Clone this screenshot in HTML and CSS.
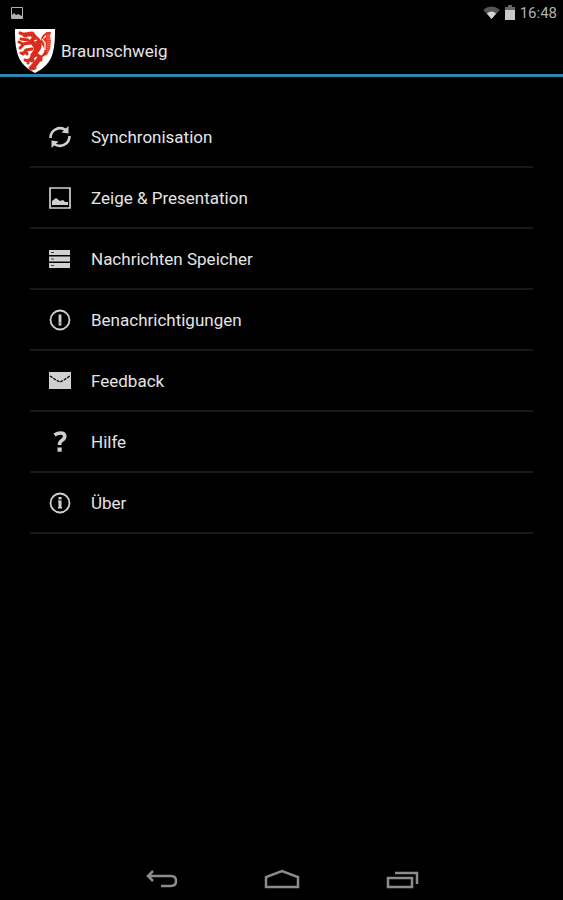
FILE: index.html
```html
<!DOCTYPE html>
<html lang="de">
<head>
<meta charset="utf-8">
<meta name="viewport" content="width=device-width, initial-scale=1">
<title>Braunschweig</title>
<link rel="stylesheet" href="styles.css">
</head>
<body>
<div class="status">
  <svg class="status-image" viewBox="0 0 12 12"><path fill="none" stroke="currentColor" d="M.5.5h11v11H.5z"/><path fill="currentColor" d="M1 11V8l2-2 2 2 2-1 4 2v2z"/></svg>
  <div class="status-right">
    <svg class="status-wifi" viewBox="0 0 18 14"><path fill="#555" d="M9 14 0 4Q9-3 18 4z"/><path fill="#d4d4d4" d="M9 14 4 8q5-4 10 0z"/></svg>
    <svg class="status-battery" viewBox="0 0 10 15"><path fill="#666" d="M3 0h4v2h3v3H0V2h3z"/><path fill="#c8c8c8" d="M0 5h10v10H0z"/></svg>
    <time class="clock">16:48</time>
  </div>
</div>
<header class="appbar">
  <svg class="crest" viewBox="0 0 40 44">
    <path fill="#fff" d="M0 0h40c0 8 0 15-2 23-2 9-8 16-18 21C10 39 4 32 2 23 0 15 0 8 0 0z"/>
    <g fill="none" stroke="#dc2d1c" stroke-linecap="round" stroke-linejoin="round">
      <path stroke-width="5" d="m10 6 7-1 3 4-4 4 4 3 2 5-4 5-1 5"/>
      <path stroke-width="5" d="M20 9q5 3 4 9l-4 6m1 2 4 3-4 5-3 4"/>
      <path stroke-width="3" d="M5 4l5 2M6 10l7 1m2 3-7 1-4-2m5 2-4 4m12 1-6 1-3 4-2-1m5-2 1 3m6 3-5 4-3-1m3 1v2m7 0-5 5m9-9 2 1m-6 4-3 5m-1 0 4-1"/>
      <path stroke-width="2" d="M26 28q6-4 4-9l-3-6q-1-5 5-9"/>
    </g>
    <path fill="#de3b2a" d="m31 3 5 0-1 4 1 5-1 8-3 6-3 1 2-5-2-7-2-4 4-3z"/>
    <path fill="none" stroke="#fff" stroke-width="1.200" d="m12 8 4 0m3 4 3-1m-5 5-2 1m7 11-3 2m8-20 3 4v7"/>
    <path fill="none" stroke="#f4a59b" stroke-dasharray="1 1" d="M33 6v18m2-18v12"/>
  </svg>
  <h1 class="title">Braunschweig</h1>
</header>
<main class="content">
  <ul class="menu">
    <li><a class="row" href="#sync"><svg class="icon" viewBox="0 0 22 22"><g fill="none" stroke="currentColor" stroke-width="2.600"><path d="M1.500 12C1.500 4 10-.5 17 4"/><path d="M20.500 10c0 8-8.500 12.500-15.500 8"/></g><path fill="currentColor" d="M19.500 0v7.500l-7-1zM2.500 22v-7.500l7 1z"/></svg>Synchronisation</a></li>
    <li><a class="row" href="#display"><svg class="icon" viewBox="0 0 22 22"><path fill="none" stroke="currentColor" stroke-width="1.700" d="M1 1h20v20H1z"/><path fill="currentColor" d="M3 18v-4l4-3 4 3 3-1 2 2h3v3z"/></svg>Zeige &amp; Presentation</a></li>
    <li><a class="row" href="#storage"><svg class="icon" viewBox="0 0 22 22"><path fill="currentColor" d="M0 2h21v5H0zm0 6.500h21v5H0zM0 15h21v5H0z"/><path stroke="#444" d="M2 4.500h3M2 11h3m-3 6.500h3"/></svg>Nachrichten Speicher</a></li>
    <li><a class="row" href="#notifications"><svg class="icon" viewBox="0 0 22 22"><circle cx="11" cy="11" r="9.500" fill="none" stroke="currentColor" stroke-width="1.800"/><path stroke="currentColor" stroke-width="2.800" d="M11 5.500v11"/><path stroke="#555" stroke-width="2.800" d="M11 13.500v.8"/></svg>Benachrichtigungen</a></li>
    <li><a class="row" href="#feedback"><svg class="icon" viewBox="0 0 22 22"><path fill="currentColor" d="M0 2h22v17H0z"/><path fill="none" stroke="#111" stroke-width="1.400" stroke-dasharray="3 1" d="m1 6 6 4 4 2 4-2 6-4"/></svg>Feedback</a></li>
    <li><a class="row" href="#help"><svg class="icon" viewBox="0 0 22 22"><path fill="none" stroke="currentColor" stroke-width="3.600" d="M5.500 4q3-2 6-2c5.500 0 5 5 2 7-2 1-3 2-3 5"/><path fill="currentColor" d="M8.500 16.500h4.200v4.200H8.500z"/></svg>Hilfe</a></li>
    <li><a class="row" href="#about"><svg class="icon" viewBox="0 0 22 22"><circle cx="11" cy="11" r="9.500" fill="none" stroke="currentColor" stroke-width="1.800"/><path fill="currentColor" d="M9.500 5h3v2.500h-3zM9 8.500h3.500V15H13v1.500H9V15h.5v-5H9z"/></svg>Über</a></li>
  </ul>
</main>
<nav class="navbar">
  <button class="nav-button" aria-label="Zurück"><svg viewBox="0 0 36 22"><path d="M9 2 4 7l5 5M4 7h23q5 0 5 5t-5 5H17"/></svg></button>
  <button class="nav-button" aria-label="Startseite"><svg viewBox="0 0 36 22"><path d="M2 18V8l16-6 16 6v10z"/></svg></button>
  <button class="nav-button" aria-label="Letzte Apps"><svg viewBox="0 0 36 22"><path d="M4 9h24v9H4zM11 4h22v11"/></svg></button>
</nav>
</body>
</html>
```
FILE: styles.css
```css
* {
  box-sizing: border-box;
}

body {
  display: flex;
  flex-direction: column;
  min-height: 100vh;
  margin: 0;
  background: #000;
  color: #e4e4e4;
  font-family: Roboto, "Liberation Sans", sans-serif;
}

svg {
  display: block;
}

.status {
  display: flex;
  align-items: center;
  justify-content: space-between;
  height: 25px;
  padding: 0 6px 0 11px;
  color: #b0b0b0;
}

.status-right {
  display: flex;
  align-items: center;
  gap: 5px;
}

.status-image {
  width: 12px;
  height: 12px;
}

.status-wifi {
  width: 17px;
  height: 13px;
}

.status-battery {
  width: 10px;
  height: 15px;
}

.clock {
  font-size: 15px;
  line-height: 24px;
}

.appbar {
  display: flex;
  align-items: center;
  gap: 6px;
  height: 52px;
  padding: 2px 0 0 15px;
  border-bottom: 3px solid #2b87ab;
}

.crest {
  width: 40px;
  height: 44px;
}

.title {
  margin: 0;
  font-size: 17px;
  font-weight: 400;
  line-height: 24px;
}

.content {
  flex: 1;
  padding: 30px;
}

.menu {
  margin: 0;
  padding: 0;
  list-style: none;
}

.row {
  display: flex;
  align-items: center;
  gap: 20px;
  height: 61px;
  padding-left: 19px;
  border-bottom: 2px solid #191919;
  color: inherit;
  font-size: 17px;
  line-height: 24px;
  text-decoration: none;
}

.icon {
  width: 22px;
  height: 22px;
  color: #d0d0d0;
}

.navbar {
  display: flex;
  justify-content: center;
  height: 40px;
}

.nav-button {
  display: flex;
  align-items: center;
  justify-content: center;
  width: 120px;
  padding: 0;
  border: 0;
  background: none;
  color: #8c8c8c;
}

.nav-button svg {
  width: 36px;
  height: 22px;
  fill: none;
  stroke: currentColor;
  stroke-width: 2.5;
}
```
